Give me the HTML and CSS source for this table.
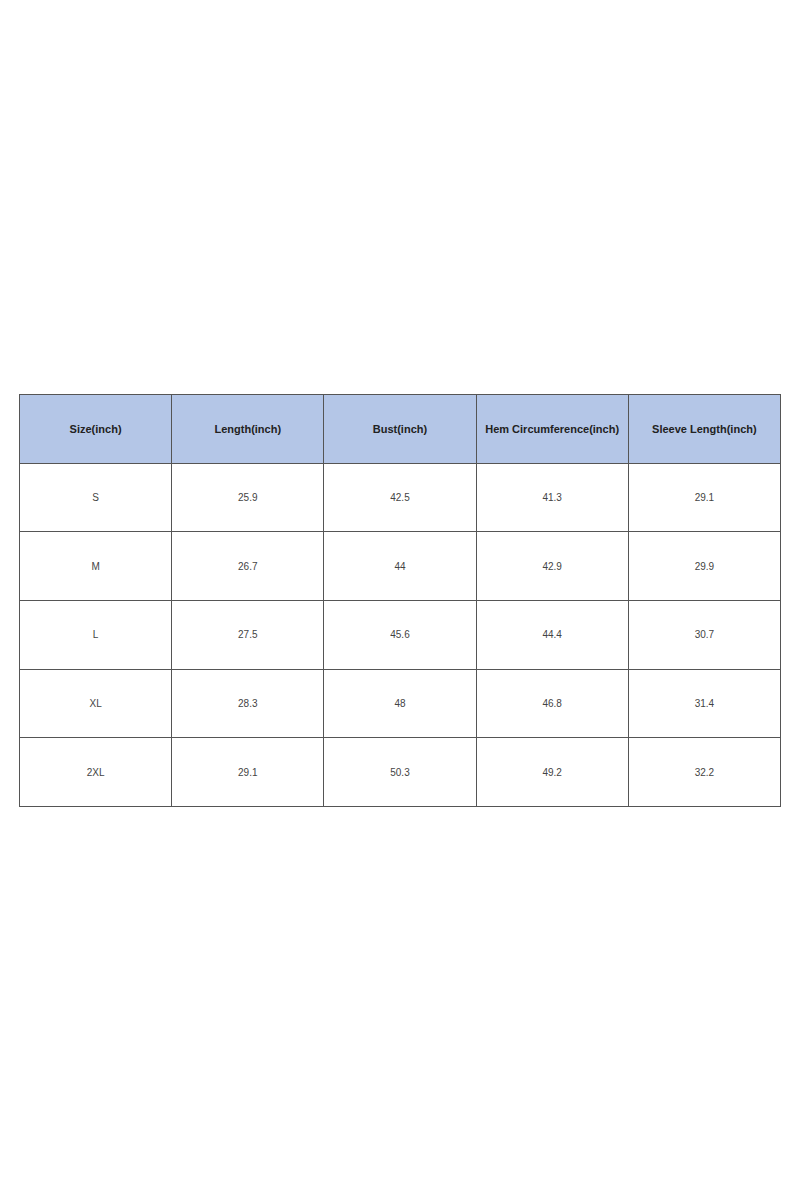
FILE: index.html
```html
<!DOCTYPE html>
<html>
<head>
<meta charset="utf-8">
<link rel="stylesheet" href="styles.css">
</head>
<body>
<div class="page">
<table class="size-table">
<thead>
<tr><th>Size(inch)</th><th>Length(inch)</th><th>Bust(inch)</th><th>Hem Circumference(inch)</th><th>Sleeve Length(inch)</th></tr>
</thead>
<tbody>
<tr><td>S</td><td>25.9</td><td>42.5</td><td>41.3</td><td>29.1</td></tr>
<tr><td>M</td><td>26.7</td><td>44</td><td>42.9</td><td>29.9</td></tr>
<tr><td>L</td><td>27.5</td><td>45.6</td><td>44.4</td><td>30.7</td></tr>
<tr><td>XL</td><td>28.3</td><td>48</td><td>46.8</td><td>31.4</td></tr>
<tr><td>2XL</td><td>29.1</td><td>50.3</td><td>49.2</td><td>32.2</td></tr>
</tbody>
</table>
</div>
</body>
</html>
```
FILE: styles.css
```css
html, body { margin: 0; padding: 0; background: #fff; }
.page { padding: 394px 19px 0 19px; }
.size-table {
  width: 762px;
  border-collapse: collapse;
  table-layout: fixed;
  font-family: "Liberation Sans", Arial, sans-serif;
}
.size-table th, .size-table td {
  border: 1px solid #555;
  text-align: center;
  vertical-align: middle;
  height: 67.67px;
  padding: 0;
}
.size-table th {
  background: #b4c6e7;
  font-size: 11px;
  font-weight: bold;
  color: #222;
}
.size-table td {
  font-size: 10px;
  color: #444;
}
```
